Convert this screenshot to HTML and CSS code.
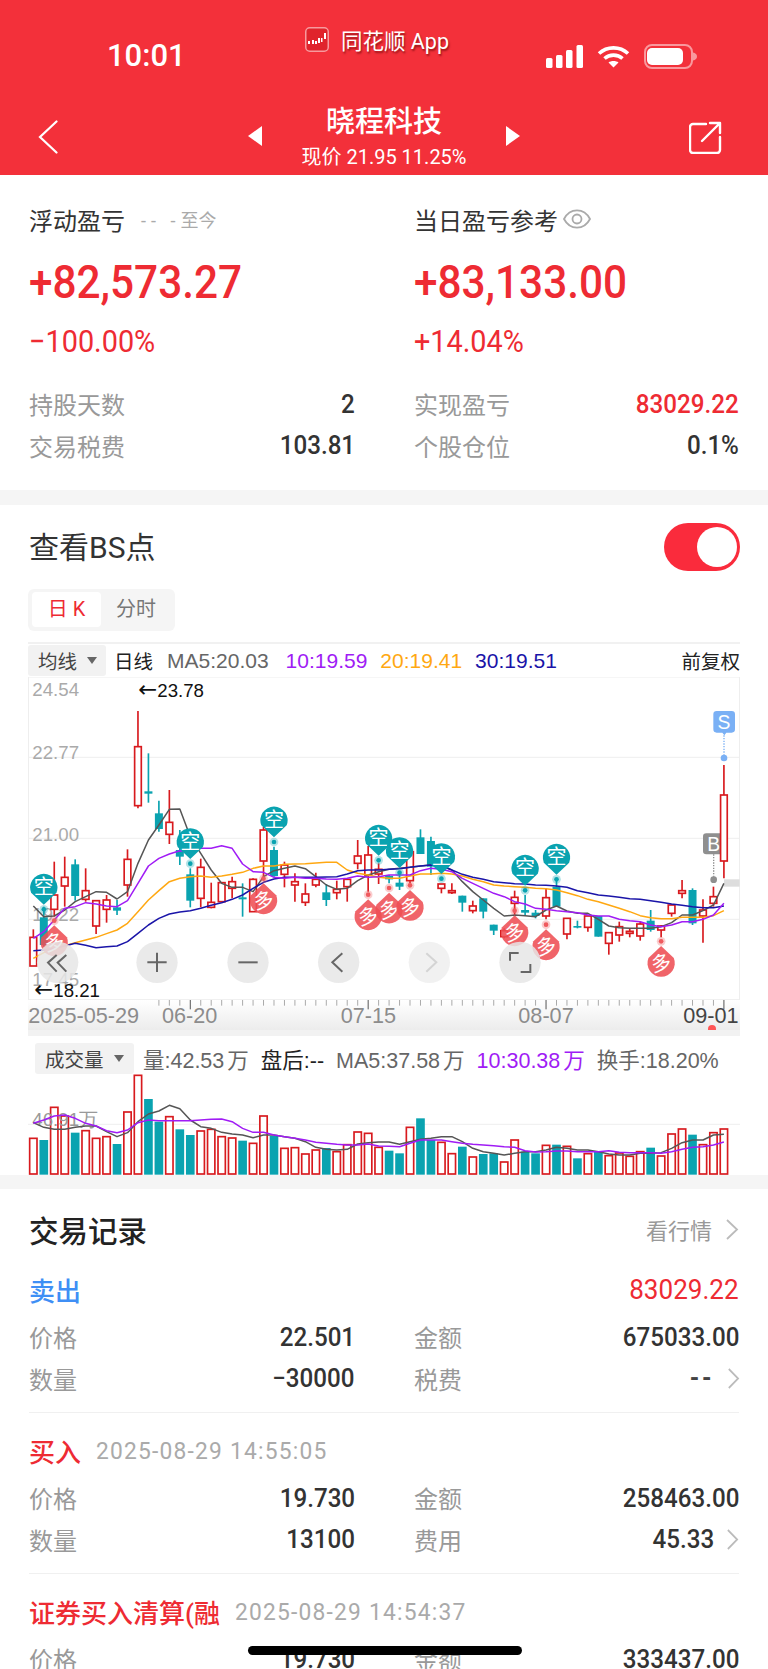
FILE: index.html
```html
<!DOCTYPE html>
<html>

<head>
    <meta charset="utf-8">
    <link rel="stylesheet" href="styles.css">
    <title>晓程科技</title>
</head>

<body>
    <header class="top">
        <div class="status">
            <div class="time">10:01</div>
            <div class="app">
                <svg class="app-logo" width="24" height="25" viewBox="0 0 24 25">
                    <rect x="0.75" y="0.75" width="22.5" height="23.5" rx="4" fill="#e0242c" stroke="#f79a9e" stroke-width="1.5"/>
                    <path d="M3 14h2v3H3zM7 13h2v4H7zM10 14h2v3h-2zM13 11h2v5h-2zM16 11h1.500v4H16zM19 6h2v6h-2z" fill="#fff"/>
                </svg>
                <span>同花顺 App</span>
            </div>
            <div class="indicators">
                <svg width="37" height="23" viewBox="0 0 37 23" fill="#fff">
                    <rect x="0" y="13" width="6.5" height="10" rx="1.5"/>
                    <rect x="10" y="10" width="6.5" height="13" rx="1.5"/>
                    <rect x="20" y="5" width="6.5" height="18" rx="1.5"/>
                    <rect x="30.5" y="0" width="6.5" height="23" rx="1.5"/>
                </svg>
                <svg width="33" height="23" viewBox="0 0 33 23" fill="none" stroke="#fff" stroke-width="3.6">
                    <path d="M2 8.5C10 1 23 1 31 8.500"/>
                    <path d="M7.500 13.500C12.500 9 20.500 9 25.500 13.500"/>
                    <path d="M16.500 22.500L11.500 17.500C14 15.500 19 15.500 21.500 17.500Z" fill="#fff" stroke="none"/>
                </svg>
                <svg width="53" height="25" viewBox="0 0 53 25">
                    <rect x="1" y="1" width="47" height="23" rx="7" fill="none" stroke="#fff" stroke-opacity=".5" stroke-width="2"/>
                    <rect x="3" y="4" width="36" height="17" rx="5" fill="#fff"/>
                    <path d="M49 8.500c2.500 .5 4 2 4 4s-1.500 3.500-4 4z" fill="#fff" fill-opacity=".5"/>
                </svg>
            </div>
        </div>
        <div class="nav">
            <svg class="back" width="20" height="34" viewBox="0 0 20 34" fill="none" stroke="#fff" stroke-width="2.2" stroke-linecap="round">
                <path d="M18.500 1.500L2 17L18.500 32.500"/>
            </svg>
            <div class="nav-mid">
                <svg width="14" height="20" viewBox="0 0 14 20" fill="#fff"><path d="M14 0V20L0 10Z"/></svg>
                <div class="nav-title">
                    <div class="stock">晓程科技</div>
                    <div class="price">现价 21.95 11.25%</div>
                </div>
                <svg width="14" height="20" viewBox="0 0 14 20" fill="#fff"><path d="M0 0V20L14 10Z"/></svg>
            </div>
            <svg class="share" width="33" height="33" viewBox="0 0 33 33" fill="none" stroke="#fff" stroke-width="2.4" stroke-linecap="round" stroke-linejoin="round">
                <path d="M17 3H4a3 3 0 0 0-3 3V29a3 3 0 0 0 3 3H28a3 3 0 0 0 3-3V16"/>
                <path d="M13 20L31 2M21 2H31V12"/>
            </svg>
        </div>
    </header>

    <section class="summary">
        <div class="col">
            <div class="sum-label">浮动盈亏 <span class="since"><span class="dashes">-- -</span>至今</span></div>
            <div class="hero">+82,573.27</div>
            <div class="pct">−100.00%</div>
            <div class="kvs">
                <div class="kv"><span class="k">持股天数</span><span class="v">2</span></div>
                <div class="kv"><span class="k">交易税费</span><span class="v">103.81</span></div>
            </div>
        </div>
        <div class="col">
            <div class="sum-label">当日盈亏参考
                <svg class="eye" width="28" height="20" viewBox="0 0 28 20" fill="none" stroke="#aaa" stroke-width="1.8">
                    <path d="M1 10C7 -1.500 21 -1.500 27 10C21 21.500 7 21.500 1 10Z"/>
                    <circle cx="14" cy="10" r="4.500"/>
                </svg>
            </div>
            <div class="hero">+83,133.00</div>
            <div class="pct">+14.04%</div>
            <div class="kvs">
                <div class="kv"><span class="k">实现盈亏</span><span class="v red">83029.22</span></div>
                <div class="kv"><span class="k">个股仓位</span><span class="v">0.1%</span></div>
            </div>
        </div>
    </section>

    <div class="band"></div>

    <section class="bs">
        <div class="bs-head">
            <div class="bs-title">查看BS点</div>
            <div class="toggle"><div class="knob"></div></div>
        </div>
        <div class="tabs">
            <div class="tab active">日 K</div>
            <div class="tab">分时</div>
        </div>

        <div class="legend">
            <div class="picker">均线<i class="caret"></i></div>
            <span class="dark ri">日线</span>
            <span class="gray">MA5:20.03</span>
            <span class="purple">10:19.59</span>
            <span class="orange">20:19.41</span>
            <span class="navy">30:19.51</span>
            <span class="dark adj">前复权</span>
        </div>

        <svg class="kline" width="712" height="323" viewBox="84 141 2136 969">
            <path d="M84 382H2220M84 625H2220M84 868H2220" stroke="#eee" stroke-width="3"/>
            <path d="M84 141H2220M85.500 141V1110M2218.500 141V1110M84 1109H2220" fill="none" stroke="#eee" stroke-width="3"/>
            <g class="ylab">
                <text x="97" y="198">24.54</text>
                <text x="97" y="388">22.77</text>
                <text x="97" y="632">21.00</text>
                <text x="97" y="873">19.22</text>
                <text x="97" y="1068">17.45</text>
            </g>
            <rect x="2172" y="748" width="47" height="22" fill="#ddd"/>
            <g id="bsMarks">
                <path d="M2109 620a10 10 0 0 1 10-10h44a10 10 0 0 1 10 10v43a10 10 0 0 1-10 10h-44a10 10 0 0 1-10-10z" fill="#8f8f8f"/>
                <path d="M2141 673V740" stroke="#8f8f8f" stroke-width="4" stroke-dasharray="4 4"/>
                <circle cx="2141" cy="749" r="10" fill="#8f8f8f"/>
                <text class="bs-letter" x="2141" y="662">B</text>
                <path d="M2140 253a10 10 0 0 1 10-10h45a10 10 0 0 1 10 10v45a10 10 0 0 1-10 10h-16l-6 8-6-8h-17a10 10 0 0 1-10-10z" fill="#7ab0f5"/>
                <path d="M2172 316V374" stroke="#7ab0f5" stroke-width="4" stroke-dasharray="4 4"/>
                <circle cx="2172" cy="384" r="10" fill="#7ab0f5"/>
                <text class="bs-letter" x="2172" y="297">S</text>
            </g>
            <g id="candles"></g>
            <g id="maLines" fill="none" stroke-width="4.500" stroke-linejoin="round"></g>
            <g id="signals"></g>
            <g class="hilo">
                <text x="415" y="202"><tspan class="arrow">←</tspan>23.78</text>
                <text x="103" y="1102"><tspan class="arrow">←</tspan>18.21</text>
            </g>
            <g class="ctrl">
                <circle cx="173" cy="997" r="62"/>
                <circle cx="471" cy="997" r="62"/>
                <circle cx="744" cy="997" r="62"/>
                <circle cx="1016" cy="997" r="62"/>
                <circle class="off" cx="1288" cy="997" r="62"/>
                <circle cx="1560" cy="997" r="62"/>
            </g>
            <g class="ctrl-ico">
                <path d="M170 975L144 998L170 1025M199 975L173 998L199 1025"/>
                <path d="M442 997H500M471 968V1026"/>
                <path d="M715 997H773"/>
                <path d="M1027 970L997 997L1027 1025"/>
                <path class="off" d="M1279 970L1309 997L1279 1025"/>
                <path d="M1530 992V969H1556M1562 1026H1591V1002"/>
            </g>
        </svg>

        <svg class="axis" width="712" height="30" viewBox="84 1110 2136 90">
            <g id="ticks"></g>
            <g class="xlab">
                <text x="85" y="1179">2025-05-29</text>
                <text x="569" y="1179" text-anchor="middle">06-20</text>
                <text x="1105" y="1179" text-anchor="middle">07-15</text>
                <text x="1638" y="1179" text-anchor="middle">08-07</text>
                <text class="last" x="2216" y="1179" text-anchor="end">09-01</text>
            </g>
        </svg>

        <div class="vol">
            <div class="vol-legend">
                <div class="picker vol-pick">成交量<i class="caret"></i></div>
                <span class="gray">量:42.53<b>万</b></span>
                <span class="dark">盘后:--</span>
                <span class="gray">MA5:37.58<b>万</b></span>
                <span class="purple">10:30.38<b>万</b></span>
                <span class="gray">换手:18.20%</span>
            </div>
            <svg class="vol-chart" width="712" height="101" viewBox="84 132 2136 303">
                <path d="M84 283H2220" stroke="#eee" stroke-width="3"/>
                <g id="bars"></g>
                <text class="vol-max" x="97" y="287">46.91万</text>
                <g id="volLines" fill="none" stroke-width="4.500" stroke-linejoin="round"></g>
            </svg>
            <i class="now-dot"></i>
        </div>
    </section>

    <div class="band band-low"></div>

    <section class="records">
        <div class="rec-head">
            <div class="rec-title">交易记录</div>
            <div class="rec-link">看行情
                <svg class="chev" width="14" height="21" viewBox="0 0 14 21"><path d="M2 1L12 10.500L2 20"/></svg>
            </div>
        </div>

        <div class="trade">
            <div class="trade-head">
                <span class="side blue">卖出</span>
                <span class="trade-pnl">83029.22</span>
            </div>
            <div class="trade-grid">
                <div class="kv"><span class="k">价格</span><span class="v">22.501</span></div>
                <div class="kv"><span class="k">金额</span><span class="v">675033.00</span></div>
                <div class="kv"><span class="k">数量</span><span class="v">−30000</span></div>
                <div class="kv"><span class="k">税费</span><span class="v"><span class="none">--</span><svg class="chev" width="14" height="21" viewBox="0 0 14 21"><path d="M2 1L12 10.500L2 20"/></svg></span></div>
            </div>
        </div>

        <div class="trade">
            <div class="trade-head">
                <span class="side">买入<span class="date">2025-08-29 14:55:05</span></span>
            </div>
            <div class="trade-grid">
                <div class="kv"><span class="k">价格</span><span class="v">19.730</span></div>
                <div class="kv"><span class="k">金额</span><span class="v">258463.00</span></div>
                <div class="kv"><span class="k">数量</span><span class="v">13100</span></div>
                <div class="kv"><span class="k">费用</span><span class="v">45.33<svg class="chev" width="14" height="21" viewBox="0 0 14 21"><path d="M2 1L12 10.500L2 20"/></svg></span></div>
            </div>
        </div>

        <div class="trade">
            <div class="trade-head">
                <span class="side">证券买入清算(融<span class="date">2025-08-29 14:54:37</span></span>
            </div>
            <div class="trade-grid">
                <div class="kv"><span class="k">价格</span><span class="v">19.730</span></div>
                <div class="kv"><span class="k">金额</span><span class="v">333437.00</span></div>
            </div>
        </div>
    </section>

    <div class="home-bar"></div>

    <script src="chart.js"></script>
</body>

</html>
```

FILE: styles.css
```css
* {
    box-sizing: border-box;
}

html,
body {
    margin: 0;
    padding: 0;
}

body {
    position: relative;
    width: 768px;
    height: 1669px;
    overflow: hidden;
    background: #fff;
    color: #333;
    font-family: Roboto, "Noto Sans CJK SC", sans-serif;
}

svg {
    display: block;
}

/* red header */
.top {
    height: 175px;
    background: #f3303a;
    color: #fff;
}

.status {
    display: grid;
    grid-template-columns: 198px 241px auto;
    height: 105px;
    padding-left: 107px;
}

.time {
    padding-top: 38px;
    font-size: 31px;
    font-weight: 500;
    line-height: 36px;
}

.app {
    display: flex;
    align-items: center;
    gap: 12px;
    height: 25px;
    margin-top: 27px;
    font-size: 21.500px;
    text-shadow: 1px 2px 2px rgba(90, 0, 0, .6);
    white-space: nowrap;
}

.indicators {
    display: flex;
    align-items: center;
    gap: 14px;
    height: 25px;
    margin-top: 44px;
}

.nav {
    display: grid;
    grid-template-columns: 1fr auto 1fr;
    align-items: center;
    height: 70px;
    padding: 0 46px;
}

.back {
    margin: -6px 0 0 -8px;
}

.share {
    justify-self: end;
    margin-top: -6px;
}

.nav-mid {
    display: flex;
    align-items: center;
    justify-content: space-between;
    width: 272px;
}

.nav-mid svg {
    margin-top: -8px;
}

.nav-title {
    text-align: center;
}

.stock {
    margin: -7px 0 5px;
    font-size: 29px;
    font-weight: 500;
    line-height: 36px;
}

.price {
    font-size: 20px;
    line-height: 24px;
    white-space: nowrap;
}

/* summary block */
.summary {
    display: grid;
    grid-template-columns: 326px 325px;
    column-gap: 59px;
    height: 315px;
    padding: 23px 0 0 29px;
}

.sum-label {
    display: flex;
    align-items: center;
    height: 42px;
    font-size: 24px;
    white-space: nowrap;
}

.since {
    margin-left: 16px;
    color: #aaa;
    font-size: 18px;
}

.dashes {
    letter-spacing: 5px;
}

.eye {
    margin-left: 5px;
}

.hero {
    margin-top: 12px;
    color: #ee2b33;
    font-size: 46px;
    font-weight: 500;
    line-height: 60px;
    transform: scaleX(.92);
    transform-origin: left;
}

.pct {
    margin-top: 10px;
    color: #ee2b33;
    font-size: 31px;
    line-height: 40px;
    transform: scaleX(.93);
    transform-origin: left;
}

.kvs {
    margin-top: 21px;
}

.kv {
    display: flex;
    align-items: center;
    justify-content: space-between;
    height: 41.5px;
}

.k {
    color: #999;
    font-size: 24px;
}

.v {
    display: flex;
    align-items: center;
    color: #333;
    font-size: 26px;
    font-weight: 500;
    white-space: pre;
    transform: scaleX(.93);
    transform-origin: right;
}

.v.red {
    color: #ee2b33;
}

.none {
    color: #444;
    font-weight: 700;
    letter-spacing: 3px;
}

.band {
    height: 15px;
    background: #f5f5f5;
}

.band-low {
    height: 14px;
}

/* BS chart */
.bs {
    position: relative;
    height: 670px;
    padding: 18px 28px 0;
}

.bs-head {
    display: flex;
    align-items: center;
    justify-content: space-between;
    height: 48px;
}

.bs-title {
    margin-top: -5px;
    padding-left: 1px;
    font-size: 30px;
}

.toggle {
    width: 76px;
    height: 48px;
    padding: 4px 3px 4px 33px;
    border-radius: 24px;
    background: #fa2b3c;
}

.knob {
    width: 40px;
    height: 40px;
    border-radius: 50%;
    background: #fff;
}

.tabs {
    display: flex;
    width: 147px;
    height: 42px;
    margin-top: 18px;
    padding: 3px 4px 4px;
    border-radius: 6px;
    background: #f5f5f5;
}

.tab {
    width: 70px;
    color: #777;
    font-size: 20px;
    line-height: 35px;
    text-align: center;
}

.tab.active {
    width: 69px;
    border-radius: 4px;
    background: #fff;
    color: #ee2b33;
}

.legend {
    display: flex;
    align-items: center;
    height: 35px;
    margin-top: 11px;
    border-top: 2px solid #f1f1f1;
    font-family: "Liberation Sans", "Noto Sans CJK SC", sans-serif;
    font-size: 21px;
    white-space: nowrap;
}

.legend span {
    margin-right: 13px;
}

.legend .gray {
    margin-right: 17px;
}

.legend .ri {
    margin-right: 14px;
    font-size: 19.500px;
}

.legend .adj {
    margin: 0 0 0 auto;
    font-size: 19.500px;
}

.picker {
    display: flex;
    align-items: center;
    width: 78px;
    height: 31px;
    margin-right: 8px;
    padding-left: 10px;
    border-radius: 3px;
    background: #f2f2f2;
    color: #444;
    font-size: 19.500px;
}

.caret {
    width: 0;
    height: 0;
    margin-left: 10px;
    border: 5px solid transparent;
    border-top: 7px solid #666;
    border-bottom: 0;
}

.dark {
    color: #222;
}

.gray {
    color: #666;
}

.purple {
    color: #a01cf5;
}

.orange {
    color: #ffa812;
}

.navy {
    color: #1a14a8;
}

.ylab text {
    fill: #aaa;
    font-family: "Liberation Sans", sans-serif;
    font-size: 56px;
}

.bs-letter {
    fill: #fff;
    font-family: "Liberation Sans", sans-serif;
    font-size: 58px;
    text-anchor: middle;
}

.sig-text {
    fill: #fff;
    font-family: "Noto Sans CJK SC", sans-serif;
    font-size: 60px;
    text-anchor: middle;
}

.hilo text {
    fill: #111;
    font-family: "Liberation Sans", sans-serif;
    font-size: 56px;
}

.hilo .arrow {
    font-family: "DejaVu Sans", sans-serif;
    font-size: 68px;
}

.ctrl circle {
    fill: #e6e6e6;
    fill-opacity: .85;
}

.ctrl .off {
    fill: #eee;
}

.ctrl-ico path {
    fill: none;
    stroke: #666;
    stroke-width: 6;
}

.ctrl-ico .off {
    stroke: #d4d4d4;
}

.axis {
    background: linear-gradient(#fff, #ececec);
}

.xlab text {
    fill: #8c8c8c;
    font-family: "Liberation Sans", sans-serif;
    font-size: 65px;
}

.xlab .last {
    fill: #444;
}

.vol {
    position: relative;
    height: 145px;
    padding-top: 6px;
    background: #f2f2f2;
}

.vol-legend {
    display: flex;
    align-items: center;
    height: 38px;
    padding: 7px 0 0 7px;
    background: #fff;
    font-family: "Liberation Sans", "Noto Sans CJK SC", sans-serif;
    font-size: 21.500px;
    white-space: nowrap;
}

.vol-legend span {
    margin-right: 12px;
}

.vol-legend b {
    margin-left: 3px;
    font-weight: 400;
}

.vol-pick {
    width: 99px;
    margin-right: 9px;
}

.vol-chart {
    background: #fff;
}

.vol-max {
    fill: #999;
    font-family: "Liberation Sans", sans-serif;
    font-size: 56px;
}

.now-dot {
    position: absolute;
    top: -5px;
    left: 680px;
    width: 8px;
    height: 8px;
    border-radius: 50%;
    background: #f55;
    clip-path: inset(0 0 3px 0);
}

/* trade records */
.records {
    padding: 20px 29px 0;
}

.rec-head {
    display: flex;
    align-items: center;
    justify-content: space-between;
    height: 40px;
    margin-bottom: 3px;
}

.rec-title {
    color: #222;
    font-size: 29.500px;
    font-weight: 500;
}

.rec-link {
    display: flex;
    align-items: center;
    color: #999;
    font-size: 22px;
}

.chev {
    margin-left: 13px;
}

.chev path {
    fill: none;
    stroke: #bbb;
    stroke-width: 1.800;
}

.trade {
    padding: 17px 0 13px;
    border-bottom: 1px solid #f0f0f0;
}

.trade-head {
    display: flex;
    align-items: center;
    justify-content: space-between;
    height: 40px;
    margin-bottom: 7px;
}

.side {
    display: flex;
    align-items: center;
    color: #ee2b33;
    font-size: 26px;
    font-weight: 500;
}

.side.blue {
    color: #3f8ff5;
}

.date {
    margin-left: 15px;
    color: #aaa;
    font-size: 24.500px;
    font-weight: 400;
    transform: scaleX(.93);
    transform-origin: left;
    letter-spacing: 1.300px;
}

.trade-pnl {
    color: #ee2b33;
    font-size: 28px;
    transform: scaleX(.93);
    transform-origin: right;
}

.trade-grid {
    display: grid;
    grid-template-columns: 326px 325px;
    column-gap: 59px;
}

.home-bar {
    position: absolute;
    top: 1646px;
    left: 248px;
    width: 274px;
    height: 9px;
    border-radius: 5px;
    background: #000;
}
```

FILE: chart.js
```js
// coordinates are in 1/3 px, same as the svg viewBox
var RED = "#d81a1e", TEAL = "#0aa3b0";
var STEP = 31.39;

function xOf(i) {
    return 100 + STEP * i;
}

// [color, high, bodyTop, bodyBottom, low]
var candles = [
    ["r",898,922,1008,1008],["t",830,862,945,950],["r",695,795,838,860],["r",680,742,768,830],
    ["t",688,703,798,812],["r",715,782,808,815],["r",812,812,888,912],["r",795,810,838,878],
    ["t",810,832,842,855],["r",658,688,765,800],["r",243,350,527,535],["t",370,484,491,518],
    ["t",512,550,597,605],["r",480,577,613,642],["t",600,660,680,705],["t",715,733,812,832],
    ["r",686,712,805,832],["r",758,817,832,835],["r",758,758,815,815],["r",740,755,775,805],
    ["t",760,802,808,860],["r",745,748,845,845],["r",590,600,693,745],["t",650,660,738,740],
    ["r",695,705,733,772],["r",730,755,765,815],["r",760,792,817,828],["r",728,748,765,772],
    ["t",762,787,810,828],["r",752,778,788,808],["r",745,748,770,815],["r",630,678,700,718],
    ["r",648,675,735,785],["r",700,718,732,762],["t",735,738,748,760],["t",725,758,770,780],
    ["r",665,665,752,760],["t",598,622,672,672],["t",620,633,710,735],["r",762,762,775,790],
    ["r",760,782,788,792],["t",797,797,818,845],["r",812,828,842,850],["t",805,805,845,865],
    ["t",884,884,902,915],["r",895,902,920,925],["r",782,802,820,855],["t",795,840,848,855],
    ["t",840,848,858,865],["r",775,803,858,868],["t",745,770,830,830],["r",865,865,912,928],
    ["t",872,888,893,895],["r",858,858,892,905],["t",858,858,920,920],["r",908,908,940,974],
    ["r",875,890,915,935],["r",895,904,910,922],["r",875,882,918,932],["t",840,872,900,905],
    ["r",885,888,900,922],["r",822,825,850,860],["r",750,782,790,805],["t",775,780,880,885],
    ["r",808,840,858,938],["r",770,800,820,830],["r",405,495,693,745]
];

var ma = {
    "#555": [828,860,858,840,815,800,785,787,807,785,700,630,585,538,537,620,670,720,760,772,772,785,740,722,715,708,716,740,765,778,775,752,735,725,718,715,712,708,705,708,720,755,785,810,835,858,855,857,860,840,828,843,850,850,868,888,893,895,895,895,890,878,855,855,842,825,760],
    "#ffa812": [985,968,955,947,938,930,922,911,900,880,845,810,782,755,745,740,738,742,738,733,727,715,708,708,703,702,701,699,697,697,720,730,735,742,745,745,738,732,732,730,732,738,748,755,765,768,770,772,775,776,780,788,797,808,815,825,835,845,857,863,866,866,862,862,862,857,842],
    "#1a14a8": [962,960,955,948,940,946,953,950,948,935,910,885,865,852,846,842,835,826,818,808,795,775,757,747,742,742,742,742,741,740,732,722,720,720,718,716,712,708,705,706,720,733,742,748,755,758,761,762,765,766,768,772,782,788,795,798,802,806,808,812,817,822,826,830,833,833,828],
    "#a01cf5": [925,905,870,835,830,818,822,828,830,812,760,708,685,672,662,664,655,655,647,655,702,725,727,742,745,742,745,745,747,748,745,738,742,740,735,735,735,722,715,718,725,745,760,775,790,800,815,822,835,838,842,845,848,855,858,858,868,872,875,885,890,885,875,875,868,855,820]
};

// [x index, circle centre y]
var kong = [[1,772],[15,635],[23,570],[33,625],[35,662],[39,680],[47,715],[50,682]];
var duo = [[2,938],[22,812],[32,860],[34,840],[36,832],[46,908],[49,950],[60,1000]];

var volTop = [325,330,232,258,308,302,325,320,342,246,136,207,275,260,298,315,303,298,320,324,332,340,258,318,355,353,372,360,354,365,344,306,310,352,362,370,292,265,330,337,371,350,381,372,370,396,330,365,370,346,344,349,385,371,365,377,369,379,365,353,378,312,297,314,344,308,297];
var volMa5 = [278,292,298,298,292,288,288,305,320,308,275,252,243,226,236,270,290,295,307,312,315,323,315,315,320,325,335,352,358,360,358,342,338,336,336,343,335,328,325,320,320,335,355,365,370,375,370,365,365,360,352,355,360,360,365,372,375,375,370,370,368,355,338,330,330,315,313];
var volMa10 = [280,270,258,255,265,280,288,302,308,300,278,270,272,272,272,272,270,268,267,275,295,307,307,315,320,325,330,337,340,343,345,345,342,348,349,350,340,330,330,330,335,340,343,345,347,350,352,362,366,365,363,363,365,365,365,362,367,368,368,368,370,365,358,352,350,345,336];

function line(ys, color) {
    var pts = ys.map(function (y, i) {
        return xOf(i).toFixed(1) + "," + y;
    }).join(" ");
    return '<polyline points="' + pts + '" stroke="' + color + '"/>';
}

function drawCandles() {
    var html = "";
    candles.forEach(function (c, i) {
        var x = xOf(i);
        var col = c[0] == "r" ? RED : TEAL;
        html += '<path d="M' + x + " " + c[1] + "V" + c[4] + '" stroke="' + col + '" stroke-width="5"/>';
        if (c[0] == "r") {
            html += '<rect x="' + (x - 10) + '" y="' + c[2] + '" width="20" height="' + (c[3] - c[2]) + '" fill="#fff" stroke="' + RED + '" stroke-width="5"/>';
        } else {
            html += '<rect x="' + (x - 12) + '" y="' + c[2] + '" width="24" height="' + (c[3] - c[2]) + '" fill="' + TEAL + '"/>';
        }
    });
    document.getElementById("candles").innerHTML = html;
}

function drawMa() {
    var html = "";
    for (var color in ma) {
        html += line(ma[color], color);
    }
    document.getElementById("maLines").innerHTML = html;
}

function drawSignals() {
    var html = "";
    kong.forEach(function (k) {
        var x = xOf(k[0]), y = k[1];
        html += '<circle cx="' + x + '" cy="' + (y + 66) + '" r="13" fill="' + TEAL + '" fill-opacity=".3"/>';
        html += '<circle cx="' + x + '" cy="' + (y + 66) + '" r="7" fill="' + TEAL + '"/>';
        html += '<path d="M' + (x - 38) + " " + (y + 16) + "A41 41 0 1 1 " + (x + 38) + " " + (y + 16) + "L" + x + " " + (y + 52) + 'Z" fill="' + TEAL + '"/>';
        html += '<text class="sig-text" x="' + x + '" y="' + (y + 21) + '">空</text>';
    });
    duo.forEach(function (d) {
        var x = xOf(d[0]), y = d[1];
        html += '<circle cx="' + x + '" cy="' + (y - 66) + '" r="13" fill="#ef5a5e" fill-opacity=".3"/>';
        html += '<circle cx="' + x + '" cy="' + (y - 66) + '" r="7" fill="#ef5a5e"/>';
        html += '<path d="M' + (x - 38) + " " + (y - 16) + "A41 41 0 1 0 " + (x + 38) + " " + (y - 16) + "L" + x + " " + (y - 52) + 'Z" fill="#ee4f54" fill-opacity=".88"/>';
        html += '<text class="sig-text" x="' + x + '" y="' + (y + 21) + '" transform="rotate(-12 ' + x + " " + y + ')">多</text>';
    });
    document.getElementById("signals").innerHTML = html;
}

function drawTicks() {
    var html = "";
    candles.forEach(function (c, i) {
        if (i < 12) return;
        var long = i == 15 || i == 32 || i == 49 || i == 66;
        html += '<path d="M' + xOf(i) + " 1110V" + (long ? 1138 : 1127) + '" stroke="' + (long ? "#555" : "#aaa") + '" stroke-width="3"/>';
    });
    document.getElementById("ticks").innerHTML = html;
}

function drawVolume() {
    var html = "";
    volTop.forEach(function (top, i) {
        var x = xOf(i);
        if (candles[i][0] == "r") {
            html += '<rect x="' + (x - 11) + '" y="' + top + '" width="22" height="' + (432 - top) + '" fill="#fff" stroke="' + RED + '" stroke-width="5"/>';
        } else {
            html += '<rect x="' + (x - 13) + '" y="' + top + '" width="26" height="' + (434 - top) + '" fill="' + TEAL + '"/>';
        }
    });
    document.getElementById("bars").innerHTML = html;
    document.getElementById("volLines").innerHTML = line(volMa5, "#555") + line(volMa10, "#a01cf5");
}

drawCandles();
drawMa();
drawSignals();
drawTicks();
drawVolume();
```
